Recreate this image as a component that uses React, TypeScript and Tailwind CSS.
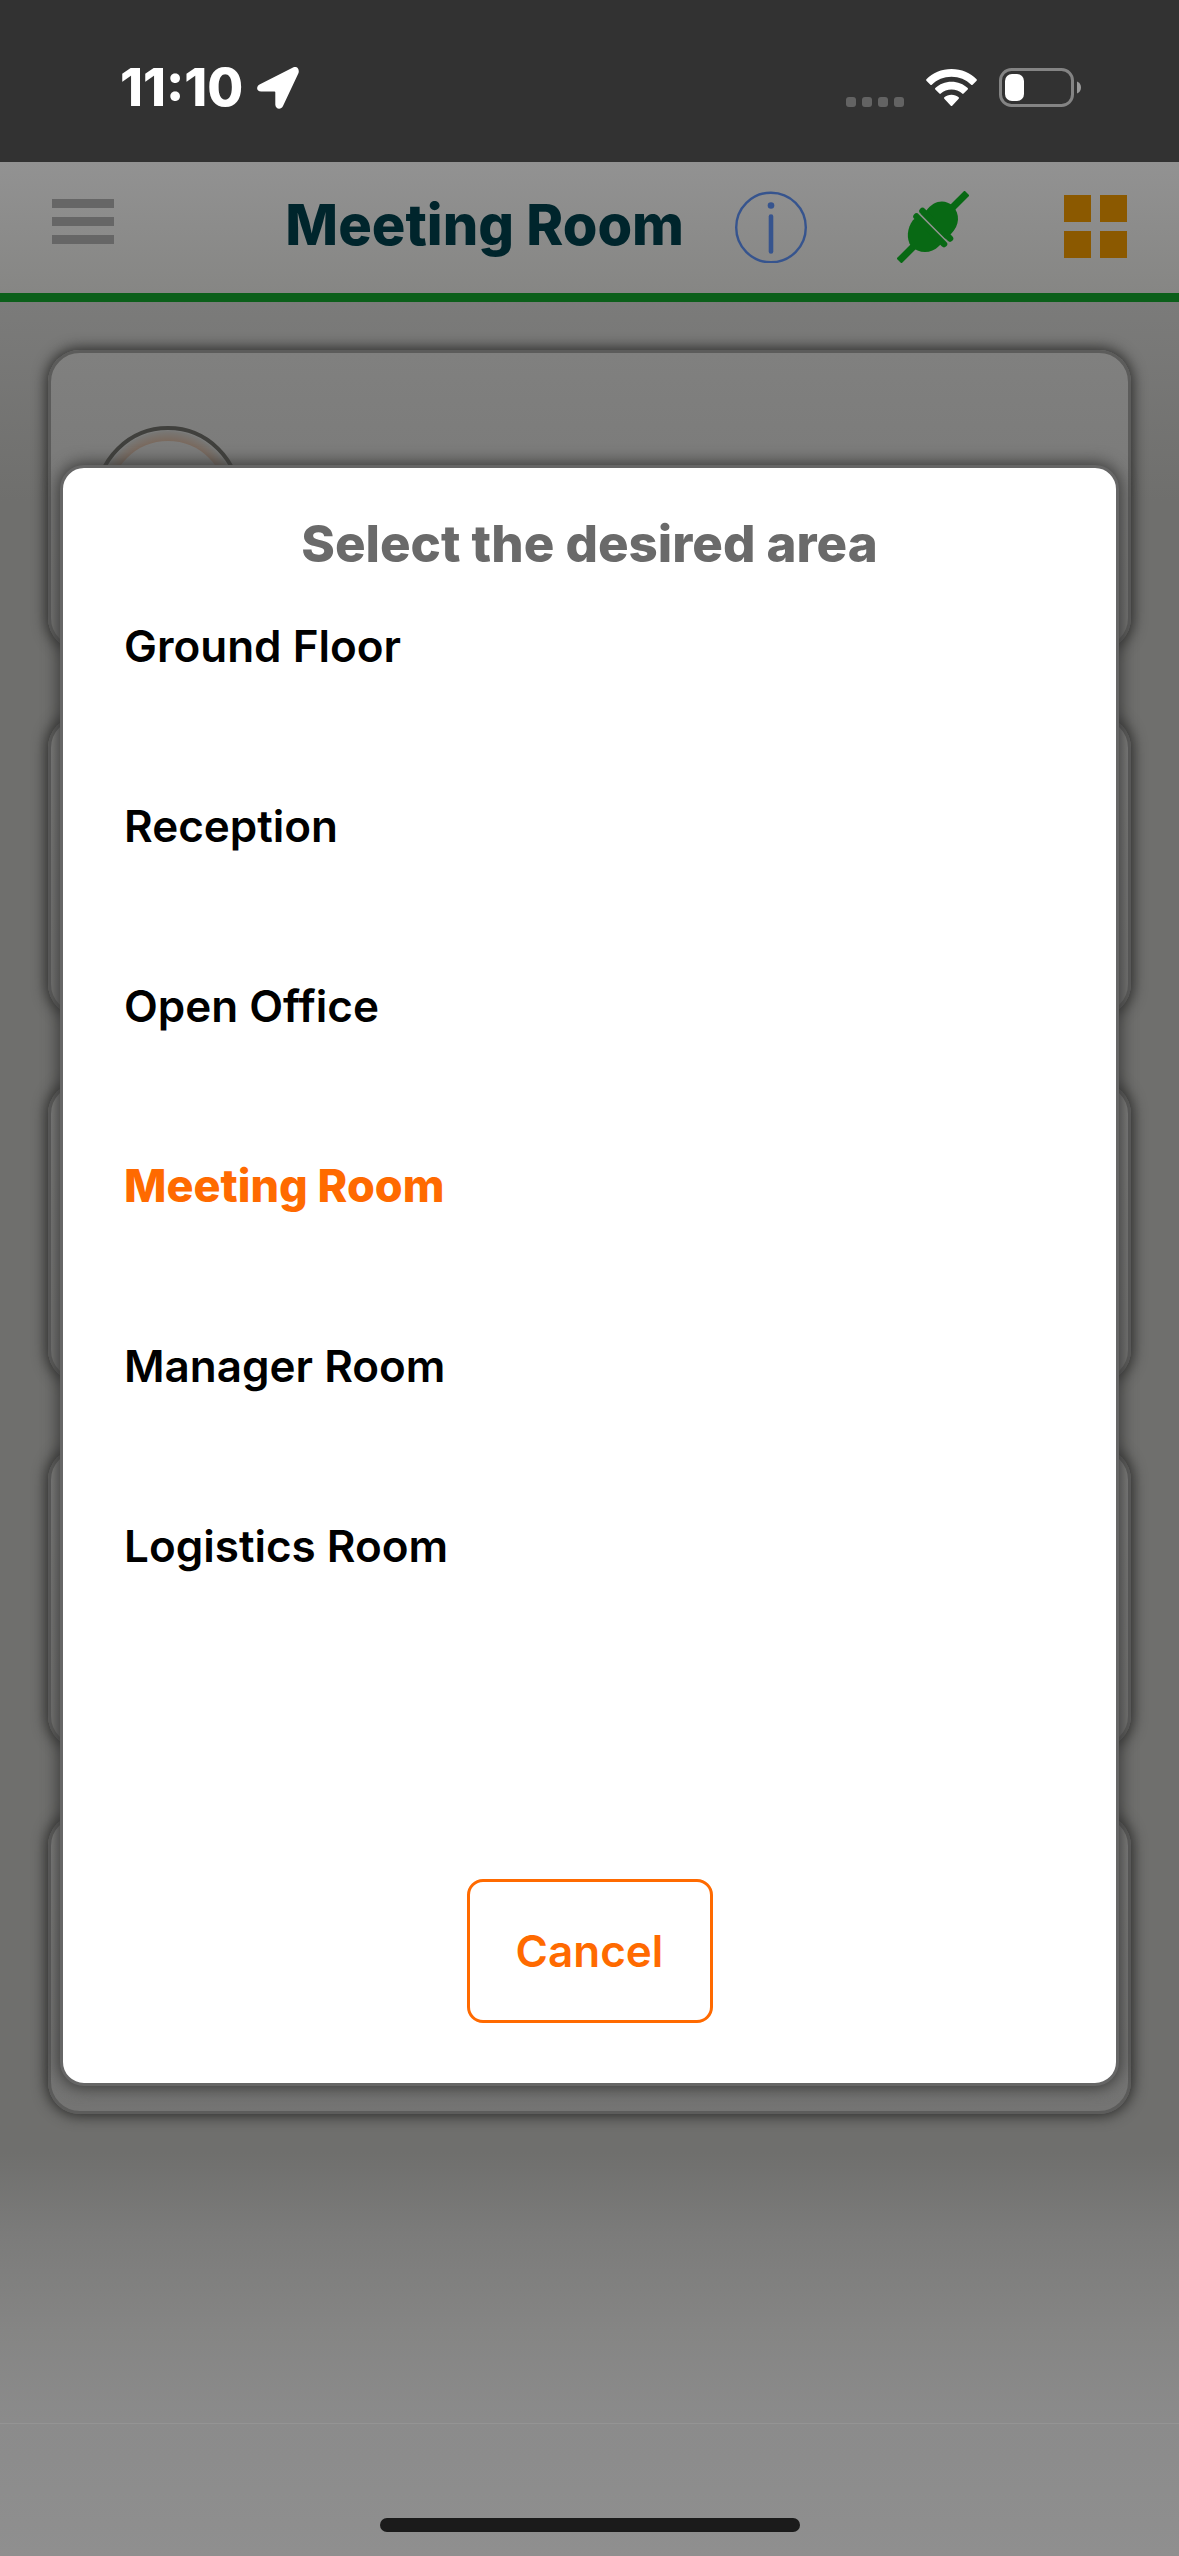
import { ReactNode, useState } from "react";

const areas = [
  "Ground Floor",
  "Reception",
  "Open Office",
  "Meeting Room",
  "Manager Room",
  "Logistics Room",
];

const StatusBar = () => (
  <div className="flex h-[162px] items-center justify-between bg-[#323232] pt-[14px] pr-[98px] pl-30">
    <div className="flex items-center gap-[14px]">
      <span className="text-[52px] leading-[60px] font-extrabold text-white">11:10</span>
      <svg className="h-[42px] w-[42px]" viewBox="0 0 42 42" fill="#fff">
        <path d="M36 .4 3 17.3C-1.400 19.600-.6 24.400 4.200 24.400H17.500c.5 0 .8.300.8.800V37.500c0 4.800 5.800 5.700 7.700 1.500L41.300 6.500C43 2.500 40-1.600 36 .4Z" />
      </svg>
    </div>
    <div className="flex items-center">
      <div className="mr-[22px] flex gap-[6px] pt-7">
        {[0, 1, 2, 3].map((dot) => (
          <span key={dot} className="h-[10px] w-[10px] rounded-[3px] bg-[#636363]" />
        ))}
      </div>
      <svg className="mr-[22px] h-[38px] w-[51px]" viewBox="0 0 51 38" fill="#fff">
        <path d="M25.500 0C35.500 0 44.500 3.900 50.600 10.300c.4.400.4 1 0 1.400l-4 4c-.4.400-1 .4-1.400 0C40 10.600 33.200 7.700 25.500 7.700S11 10.600 5.800 15.700c-.4.400-1 .4-1.400 0l-4-4c-.4-.4-.4-1 0-1.400C6.500 3.900 15.500 0 25.500 0Z" />
        <path d="M25.500 12.800c6.300 0 12 2.400 16.200 6.300.4.400.4 1 0 1.400l-4.100 4.100c-.4.400-1 .4-1.400 0-2.900-2.500-6.600-4-10.700-4s-7.800 1.500-10.700 4c-.4.400-1 .4-1.400 0l-4.100-4.100c-.4-.4-.4-1 0-1.400 4.200-3.900 9.900-6.300 16.200-6.300Z" />
        <path d="M25.500 25.700c2.800 0 5.300 1 7.200 2.600.4.400.4 1 0 1.400l-6.500 7.100c-.4.400-1 .4-1.400 0l-6.500-7.100c-.4-.4-.4-1 0-1.400 1.900-1.600 4.400-2.600 7.200-2.600Z" />
      </svg>
      <svg className="h-[40px] w-[82px]" viewBox="0 0 82 40">
        <rect x="1.500" y="1.500" width="72" height="36" rx="11" fill="none" stroke="#848484" strokeWidth="3" />
        <path d="M78 13.500c2.600 1 4 3.300 4 6s-1.400 5-4 6Z" fill="#9a9a9a" />
        <rect x="6" y="6" width="19" height="27" rx="7" fill="#fff" />
      </svg>
    </div>
  </div>
);

const IconButton = ({ label, children }: { label: string; children: ReactNode }) => (
  <button type="button" aria-label={label} className="flex h-[72px] w-[72px] items-center justify-center">
    {children}
  </button>
);

const Header = () => (
  <header className="flex h-[140px] items-center justify-between border-b-9 border-[#0b5f1a] bg-linear-to-b from-[#929292] to-[#868684] pr-12 pb-[2px] pl-[47px]">
    <IconButton label="Menu">
      <svg className="h-[72px] w-[62px]" viewBox="0 0 62 72" fill="#666">
        <path d="M0 8h62v9H0zM0 26h62v9H0zM0 44h62v9H0z" />
      </svg>
    </IconButton>
    <div className="flex items-center">
      <h1 className="mr-[51px] pb-1 text-[56px] leading-[72px] font-extrabold whitespace-nowrap text-[#00252c]">
        Meeting Room
      </h1>
      <div className="flex gap-[90px]">
        <IconButton label="Information">
          <svg className="h-[72px] w-[72px]" viewBox="0 0 72 72" fill="none" stroke="#36548e">
            <circle cx="36" cy="36.500" r="34.800" strokeWidth="2.400" />
            <path d="M36 25.500v35" strokeWidth="4.600" strokeLinecap="round" />
            <circle cx="36" cy="14.500" r="3.300" fill="#36548e" stroke="none" />
          </svg>
        </IconButton>
        <IconButton label="Connection">
          <svg className="h-[72px] w-[72px]" viewBox="0 0 72 72" fill="#086914" stroke="#086914">
            <path d="M2 70 18 54M54 18 70 2" strokeWidth="7" />
            <path d="M16 29C10 37 9 48 14 55 22 63 34 63 42 55L47 50 22 25Z" stroke="none" />
            <path d="M29 20C37 9 48 8 56 15 63 23 63 34 54 43L48 48 24 23Z" stroke="none" />
            <path d="m19.500 25.500 27.500 27.500M25.500 20l27.500 27.500" strokeWidth="6.500" strokeLinecap="round" />
            <path d="m22 22.500 28.500 28.500" stroke="#869186" strokeWidth="1.200" />
          </svg>
        </IconButton>
        <IconButton label="Dashboard">
          <svg className="h-[63px] w-[63px]" viewBox="0 0 63 63" fill="#8b5900">
            <path d="M0 0h27v27H0zM36 0h27v27H36zM0 36h27v27H0zM36 36h27v27H36z" />
          </svg>
        </IconButton>
      </div>
    </div>
  </header>
);

const Card = ({ children }: { children?: ReactNode }) => (
  <div className="h-[300px] overflow-hidden rounded-[32px] border-3 border-[#5c5c5b] bg-linear-to-b from-[#80807f] to-[#747473] shadow-[0_0_14px_2px_#2c2c2b]">
    {children}
  </div>
);

const AreaDialog = () => {
  const [selected, setSelected] = useState("Meeting Room");

  return (
    <div
      role="dialog"
      aria-labelledby="area-title"
      className="absolute inset-x-[60px] top-[465px] flex flex-col items-center rounded-3xl border-3 border-[#666] bg-white pt-[46px] pb-15 shadow-[0_0_16px_2px_#3a3a39]"
    >
      <h2 id="area-title" className="text-[51px] leading-[60px] font-extrabold text-[#6a6a6a]">
        Select the desired area
      </h2>
      <ul className="w-full px-[61px] pt-[42px]">
        {areas.map((area) => (
          <li key={area} className="h-[180px]">
            <button
              type="button"
              onClick={() => setSelected(area)}
              className={
                area === selected
                  ? "block w-full text-left text-[45px] leading-[60px] font-extrabold text-[#ff6a00]"
                  : "block w-full text-left text-[44px] leading-[60px] font-semibold text-black"
              }
            >
              {area}
            </button>
          </li>
        ))}
      </ul>
      <button
        type="button"
        className="mt-[183px] h-36 w-[246px] rounded-2xl border-3 border-[#ff6a00] text-[44px] leading-[60px] font-semibold text-[#ff6a00]"
      >
        Cancel
      </button>
    </div>
  );
};

export default function App() {
  return (
    <div className="relative flex min-h-screen flex-col bg-[#8d8d8d] font-[Inter,'Liberation_Sans',sans-serif]">
      <StatusBar />
      <Header />
      <main className="flex grow flex-col gap-[66px] bg-[linear-gradient(to_bottom,#7b7b7a_0,#6f6f6d_200px,#6f6f6d_1850px,#7b7b7a_1930px,#858584_2028px,#8b8b8b_2118px)] px-12 pt-12">
        <Card>
          <svg className="mt-[73px] ml-[44px] h-[146px] w-[146px]" viewBox="0 0 146 146" fill="none">
            <defs>
              <radialGradient id="ring" gradientUnits="userSpaceOnUse" cx="73" cy="73" r="68">
                <stop offset="0.85" stopColor="#7a695d" />
                <stop offset="1" stopColor="#787876" />
              </radialGradient>
            </defs>
            <circle cx="73" cy="73" r="63" stroke="url(#ring)" strokeWidth="10" />
            <circle cx="73" cy="73" r="71" stroke="#40403d" strokeWidth="4" />
          </svg>
        </Card>
        <Card />
        <Card />
        <Card />
        <Card />
      </main>
      <footer className="flex h-[133px] items-end justify-center border-t border-[#949494] bg-linear-to-b from-[#8b8b8b] to-[#8f8f8f] pb-6">
        <div className="h-[14px] w-[420px] rounded-full bg-[#1b1b1b]" />
      </footer>
      <AreaDialog />
    </div>
  );
}
